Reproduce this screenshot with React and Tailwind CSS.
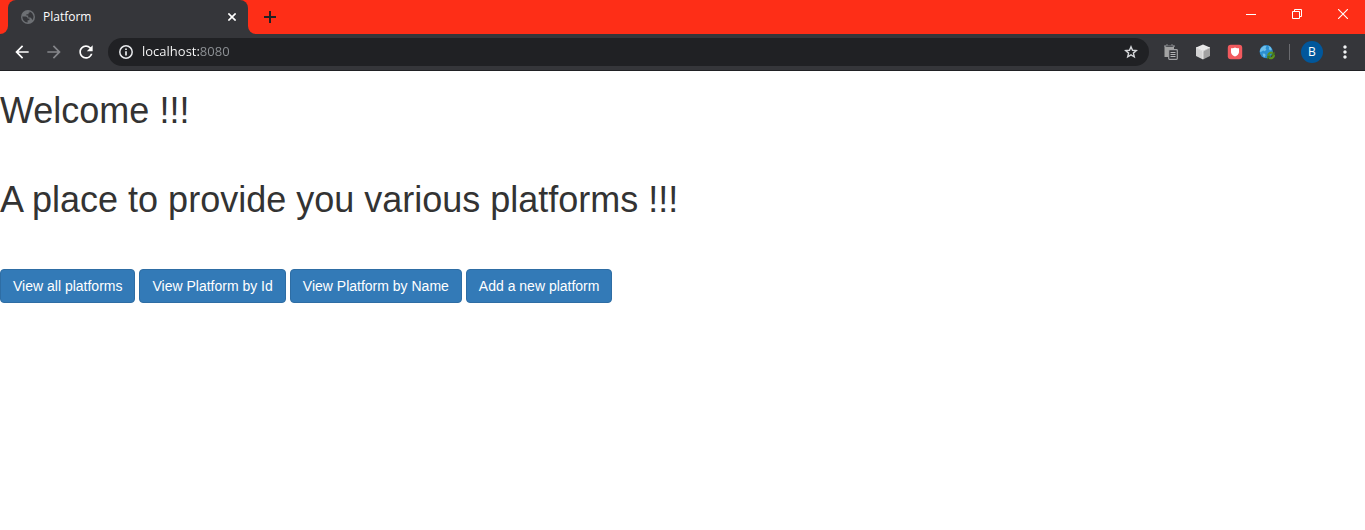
import { MdArrowBack, MdArrowForward, MdMoreVert, MdRefresh } from 'react-icons/md';

function GlobeIcon() {
  return (
    <svg viewBox="0 0 14 14" className="size-3.5">
      <circle cx="7" cy="7" r="7" fill="#6d7074" />
      <path
        d="M1.3 6.6H4.6Q6.6 6.8 6.8 8.6H8.4V10.2H6.6V12.6Q1.6 12.2 1.3 6.6ZM8.6 1.6Q11.6 2.6 12.5 6Q12.8 8.4 11.4 10.2Q10.8 8.2 9.4 7.6H7.2V5.6H5.4V4.2H7.6V2.8H8.6Z"
        fill="#35363a"
      />
    </svg>
  );
}

function InfoIcon() {
  return (
    <svg viewBox="0 0 14 14" className="size-3.5" fill="none" stroke="currentColor">
      <circle cx="7" cy="7" r="6.2" strokeWidth="1.5" />
      <path d="M7 6.2V10.6M7 3.4V5" strokeWidth="1.7" />
    </svg>
  );
}

function StarIcon() {
  return (
    <svg viewBox="0 0 14 14" className="size-3.5" fill="none" stroke="currentColor" strokeWidth="1.4">
      <path d="M7 1.8 8.5 5.3 12.3 5.6 9.4 8.1 10.3 11.9 7 9.9 3.7 11.9 4.6 8.1 1.7 5.6 5.5 5.3Z" />
    </svg>
  );
}

function TabStrip() {
  return (
    <div className="flex h-[34px] bg-[#35363a]">
      <div className="w-2 rounded-br-lg bg-[#fe2e17]" />
      <div className="bg-[#fe2e17]">
        <div className="flex h-full w-60 items-center rounded-t-lg bg-[#35363a] pr-3 pl-[13px]">
          <GlobeIcon />
          <span className="ml-2 flex-1 text-xs text-white">Platform</span>
          <button aria-label="Close tab" className="text-white">
            <svg viewBox="0 0 8 8" className="size-2" stroke="currentColor" strokeWidth="1.6">
              <path d="M0.4 0.4 7.6 7.6M7.6 0.4 0.4 7.6" />
            </svg>
          </button>
        </div>
      </div>
      <div className="flex flex-1 justify-between rounded-bl-lg bg-[#fe2e17]">
        <button aria-label="New tab" className="pl-4 text-[#202124]">
          <svg viewBox="0 0 12 12" className="size-3" stroke="currentColor" strokeWidth="2">
            <path d="M6 0V12M0 6H12" />
          </svg>
        </button>
        <div className="flex h-7 text-white">
          <button aria-label="Minimize" className="flex w-[46px] items-center justify-center">
            <svg viewBox="0 0 10 10" className="size-2.5" stroke="currentColor">
              <path d="M0 5.5H10" />
            </svg>
          </button>
          <button aria-label="Restore" className="flex w-[46px] items-center justify-center">
            <svg viewBox="0 0 10 10" className="size-2.5" fill="none" stroke="currentColor">
              <path d="M0.5 2.5H7.5V9.5H0.5ZM2.5 2.5V0.5H9.5V7.5H7.5" />
            </svg>
          </button>
          <button aria-label="Close" className="flex w-[45px] items-center justify-center">
            <svg viewBox="0 0 10 10" className="size-2.5" stroke="currentColor" strokeWidth="1.1">
              <path d="M0 0 10 10M10 0 0 10" />
            </svg>
          </button>
        </div>
      </div>
    </div>
  );
}

function ClipboardIcon() {
  return (
    <svg viewBox="0 0 16 16" className="size-4">
      <path d="M1.5 2H11V6H6V13H1.5Z" fill="#a3a3a3" />
      <path d="M1.2 1.3H3V0.5H5V1.3H8V0.5H10V1.3H11.8V3H1.2Z" fill="#85878a" />
      <path d="M3.2 2.2H9.8" stroke="#35363a" strokeWidth="1" />
      <rect x="5.7" y="5.7" width="8.6" height="9.6" rx="0.8" fill="#35363a" stroke="#a0a1a3" strokeWidth="1.2" />
      <path d="M7.5 8.5H12.5M7.5 10.5H12.5M7.5 12.5H12.5" stroke="#b5b6b8" />
    </svg>
  );
}

function CubeIcon() {
  return (
    <svg viewBox="0 0 16 16" className="size-4">
      <path d="M8 0.5 15 3.5 8 7 1 3.5Z" fill="#e9e9e9" />
      <path d="M1 3.5 8 7V15.5L1 12Z" fill="#d2d2d2" />
      <path d="M15 3.5 8 7V15.5L15 12Z" fill="#a2a2a2" />
      <path d="M1 3.5 8 7 15 3.5M8 7V15" stroke="#fafafa" strokeWidth="0.7" fill="none" />
    </svg>
  );
}

function ShieldIcon() {
  return (
    <svg viewBox="0 0 16 16" className="size-4">
      <rect x="0.8" y="0.8" width="14.4" height="14.4" rx="3" fill="#f25a5e" />
      <path d="M4 4.2Q6.5 4.6 8 3.6Q9.5 4.6 12 4.2V8.2Q11.7 11 8 12.5Q4.3 11 4 8.2Z" fill="#fff" />
    </svg>
  );
}

function EarthIcon() {
  return (
    <svg viewBox="0 0 16 16" className="size-4">
      <circle cx="7.2" cy="7.6" r="6.6" fill="#2b8fd0" />
      <path
        d="M2 4.2 5 1.7 7.5 2 6.5 4.2 7.4 5.6 5.8 7.2 4.2 6.6 1.4 8.2 0.9 6.5ZM9 1.6 11.6 3 12.8 5.8 11 6.4 9.8 5 10.2 3.4ZM3.6 9.4 6 9.8 6.6 11.4 5.4 13.4 4.2 12.2Z"
        fill="#6fbfe9"
      />
      <path d="M9.2 11.2A3 3 0 0 1 13.8 9.2M15 11A3.2 3.2 0 0 1 10.2 13.8" stroke="#5b9420" strokeWidth="2.2" fill="none" />
      <path d="M15.6 7.6V11.4H11.8ZM8.2 15.4V11.6H12Z" fill="#477d17" />
    </svg>
  );
}

function Toolbar() {
  return (
    <div className="flex h-[37px] items-center border-b border-[#202124] bg-[#35363a] pr-2.5 pl-3">
      <div className="flex items-center gap-3 text-white">
        <button aria-label="Back">
          <MdArrowBack className="size-5" />
        </button>
        <button aria-label="Forward" className="text-[#85868a]">
          <MdArrowForward className="size-5" />
        </button>
        <button aria-label="Reload">
          <MdRefresh className="size-5" />
        </button>
      </div>
      <div className="ml-3 flex h-7 flex-1 items-center rounded-full bg-[#202124] px-[11px]">
        <button aria-label="View site information" className="text-[#e8eaed]">
          <InfoIcon />
        </button>
        <input
          type="text"
          aria-label="Address"
          defaultValue="localhost:8080"
          className="ml-[9px] min-w-0 flex-1 bg-linear-to-r from-white from-[58px] to-[#8f9397] to-[58px] bg-clip-text text-[13px] text-transparent caret-white outline-none"
        />
        <button aria-label="Bookmark this page" className="text-[#d5d7da]">
          <StarIcon />
        </button>
      </div>
      <div className="ml-3.5 flex items-center gap-4">
        <button aria-label="Clipboard"><ClipboardIcon /></button>
        <button aria-label="Cube"><CubeIcon /></button>
        <button aria-label="Shield"><ShieldIcon /></button>
        <button aria-label="Earth"><EarthIcon /></button>
      </div>
      <div className="ml-3.5 h-4 w-px bg-[#6a6b6f]" />
      <button aria-label="Profile" className="ml-[11px] size-[22px] rounded-full bg-[#01579b] text-xs leading-[22px] text-white">
        B
      </button>
      <button aria-label="Menu" className="ml-3 text-[#f1f3f4]">
        <MdMoreVert className="size-5" />
      </button>
    </div>
  );
}

const actions = [
  'View all platforms',
  'View Platform by Id',
  'View Platform by Name',
  'Add a new platform',
];

export default function App() {
  return (
    <div className="min-h-screen bg-white">
      <header className="font-['Open_Sans',sans-serif]">
        <TabStrip />
        <Toolbar />
      </header>
      <main className="pt-5 font-['Liberation_Sans',Arial,sans-serif] text-[#333333]">
        <h1 className="mb-[49px] text-4xl leading-10 font-medium">Welcome !!!</h1>
        <h1 className="mb-[49px] text-4xl leading-10 font-medium">
          A place to provide you various platforms !!!
        </h1>
        <div className="flex flex-wrap gap-1">
          {actions.map((label) => (
            <button
              key={label}
              className="rounded-sm border border-[#2e6da4] bg-[#337ab7] px-3 py-1.5 text-sm leading-5 text-white hover:bg-[#286090]"
            >
              {label}
            </button>
          ))}
        </div>
      </main>
    </div>
  );
}
